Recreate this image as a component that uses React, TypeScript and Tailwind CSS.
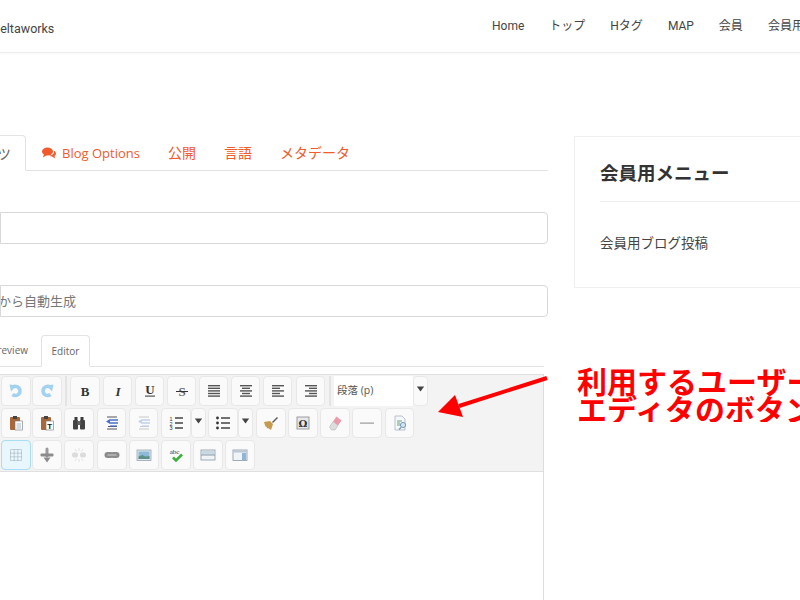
const NAV = ["Home", "トップ", "Hタグ", "MAP", "会員", "会員用ブログ"];

// little 16x16 drawings of the CKEditor toolbar glyphs
function Lines({ rows }: { rows: number[][] }) {
  return (
    <>
      {rows.map(([x, w], i) => (
        <rect key={i} x={x} y={2 + i * 2.6} width={w} height={1.4} fill="#555" />
      ))}
    </>
  );
}

function Glyph({ name }: { name: string }) {
  switch (name) {
    case "undo":
    case "redo":
      return (
        <g transform={name === "redo" ? "translate(16,0) scale(-1,1)" : undefined}>
          <path d="M5 4A4.6 4.6 0 1 1 4.5 11.5" fill="none" stroke="#a3d2f0" strokeWidth="3.6" />
          <path d="M1.5 1.5L8.5 2.5 3 8.5z" fill="#a3d2f0" />
        </g>
      );
    case "B":
    case "I":
    case "U":
    case "S":
      return (
        <>
          <text
            x="8"
            y={name === "U" ? 11 : 12.5}
            textAnchor="middle"
            fontSize="13"
            fontFamily="'Liberation Serif', serif"
            fontWeight="bold"
            fontStyle={name === "I" ? "italic" : "normal"}
            fill={name === "S" ? "#666" : "#333"}
          >
            {name}
          </text>
          {name === "U" && <rect x="3" y="12.5" width="10" height="1.2" fill="#555" />}
          {name === "S" && <rect x="2" y="8" width="12" height="1" fill="#333" />}
        </>
      );
    case "justify":
      return <Lines rows={[[2, 12], [2, 12], [2, 12], [2, 12], [2, 12]]} />;
    case "center":
      return <Lines rows={[[2, 12], [4, 8], [2, 12], [4, 8], [2, 12]]} />;
    case "left":
      return <Lines rows={[[2, 12], [2, 8], [2, 12], [2, 8], [2, 12]]} />;
    case "right":
      return <Lines rows={[[2, 12], [6, 8], [2, 12], [6, 8], [2, 12]]} />;
    case "paste":
    case "pastetext":
      return (
        <>
          <rect x="2" y="2" width="10" height="13" rx="1" fill="#a9683a" />
          <rect x="5" y="1" width="4" height="3" fill="#444" />
          <rect x="7" y="6" width="7.5" height="9" fill="#fff" stroke="#777" strokeWidth="0.6" />
          {name === "pastetext" ? (
            <text x="10.8" y="13.6" textAnchor="middle" fontSize="8" fontWeight="bold" fontFamily="'Liberation Sans', sans-serif" fill="#222">
              T
            </text>
          ) : (
            <path d="M8.5 9h4.5M8.5 11h4.5M8.5 13h4.5" stroke="#8aa9c0" strokeWidth="0.8" />
          )}
        </>
      );
    case "find":
      return (
        <>
          <rect x="3.5" y="2" width="3" height="4" fill="#3a3a3a" />
          <rect x="9.5" y="2" width="3" height="4" fill="#3a3a3a" />
          <rect x="2" y="5" width="5" height="9.5" rx="1" fill="#444" />
          <rect x="9" y="5" width="5" height="9.5" rx="1" fill="#444" />
          <rect x="6.5" y="6" width="3" height="4" fill="#666" />
        </>
      );
    case "outdent":
    case "indent": {
      const c = name === "outdent" ? "#4a70cc" : "#c2d0ea";
      const line = name === "outdent" ? "#555" : "#c8c8c8";
      return (
        <>
          <path d="M3 2h10M3 14h10M4 11.5h9" stroke={line} strokeWidth="1.2" />
          <path d="M6 5h8M6 8h8" stroke={c} strokeWidth="1.3" />
          <path d="M2 6.5l4-2.5v5z" fill={c} />
          <path d="M6 11h7" stroke={c} strokeWidth="1.2" />
        </>
      );
    }
    case "ol":
      return (
        <>
          <path d="M7 3h8M7 8h8M7 13h8" stroke="#444" strokeWidth="1.3" />
          <text x="3" y="6" textAnchor="middle" fontSize="5.5" fill="#333" fontFamily="'Liberation Sans', sans-serif">1</text>
          <text x="3" y="10.5" textAnchor="middle" fontSize="5.5" fill="#333" fontFamily="'Liberation Sans', sans-serif">2</text>
          <text x="3" y="15" textAnchor="middle" fontSize="5.5" fill="#333" fontFamily="'Liberation Sans', sans-serif">3</text>
        </>
      );
    case "ul":
      return (
        <>
          <path d="M6 3h9M6 8h9M6 13h9" stroke="#444" strokeWidth="1.3" />
          <circle cx="2.5" cy="3" r="1.4" fill="#333" />
          <circle cx="2.5" cy="8" r="1.4" fill="#333" />
          <circle cx="2.5" cy="13" r="1.4" fill="#333" />
        </>
      );
    case "brush":
      return (
        <>
          <path d="M9 7l5-5 1 1-5 5z" fill="#5a5a5a" />
          <path d="M1 7l6-1 3 3-2 6-3-2-1 .5-.5-2-1 .2z" fill="#c89a4c" />
        </>
      );
    case "omega":
      return (
        <>
          <rect x="2" y="2" width="12" height="12" fill="#e8e8e8" stroke="#888" strokeWidth="0.8" />
          <text x="8" y="12" textAnchor="middle" fontSize="10" fontWeight="bold" fontFamily="'DejaVu Serif', serif" fill="#333">
            Ω
          </text>
        </>
      );
    case "eraser":
      return (
        <>
          <path d="M9.5 1.5l5 4-3.5 5-5-4z" fill="#ea9aa8" />
          <path d="M6 6.5l5 4-3 4.5H4.5L2.5 12z" fill="#dddddd" stroke="#aaaaaa" strokeWidth="0.5" />
        </>
      );
    case "hr":
      return <rect x="1" y="7.5" width="14" height="1.2" fill="#999" />;
    case "preview":
      return (
        <>
          <path d="M3 1h7l3 3v11H3z" fill="#f4f8fa" stroke="#9ab" strokeWidth="0.7" />
          <path d="M5 6h5M5 8h3M5 10h4" stroke="#5a9a6a" strokeWidth="0.9" />
          <circle cx="11" cy="10" r="2.6" fill="#cfe4f4" stroke="#6d93b5" strokeWidth="0.9" />
          <path d="M9 12.5l-2 2" stroke="#6d93b5" strokeWidth="1.2" />
        </>
      );
    case "table":
      return <path d="M2.5 2.5h11v11h-11zM6.2 2.5v11M9.8 2.5v11M2.5 6.2h11M2.5 9.8h11" fill="none" stroke="#6f7c86" strokeWidth="0.6" strokeDasharray="1 1" />;
    case "anchor":
      return (
        <>
          <rect x="6.5" y="0.5" width="3" height="10" rx="1.5" fill="#9a9a9a" />
          <rect x="1.5" y="6.5" width="13" height="3" rx="1" fill="#8c8c8c" />
          <path d="M4.5 10.5h7L8 15.5z" fill="#8c8c8c" />
        </>
      );
    case "unlink":
      return (
        <>
          <rect x="1" y="5.5" width="6" height="5" rx="2" fill="#dcdcdc" />
          <rect x="9" y="5.5" width="6" height="5" rx="2" fill="#dcdcdc" />
          <path d="M8 1v3M8 12v3M4 2l1.5 2.5M12 2l-1.5 2.5M4 14l1.5-2.5M12 14l-1.5-2.5" stroke="#dddddd" strokeWidth="0.8" />
        </>
      );
    case "link":
      return (
        <>
          <rect x="0.5" y="5" width="9" height="6" rx="3" fill="#8c8c8c" />
          <rect x="6.5" y="5" width="9" height="6" rx="3" fill="#8c8c8c" />
          <path d="M3.5 8h9" stroke="#cfcfcf" strokeWidth="1" />
        </>
      );
    case "image":
      return (
        <>
          <rect x="1" y="3" width="14" height="10.5" fill="#dfe8ef" stroke="#8a98a5" strokeWidth="0.7" />
          <rect x="2.5" y="4.5" width="11" height="7.5" fill="#8fb9d8" />
          <path d="M2.5 12V9.5l4-1.5 3 1.5 4-.5V12z" fill="#5f9088" />
        </>
      );
    case "spell":
      return (
        <>
          <text x="6.5" y="6.5" textAnchor="middle" fontSize="7" fontFamily="'Liberation Serif', serif" fill="#333">
            abc
          </text>
          <path d="M5 10.5l3 3 6-6" fill="none" stroke="#3fae3f" strokeWidth="2.6" />
        </>
      );
    case "block":
      return (
        <>
          <rect x="1" y="3" width="14" height="10" fill="#f1f4f6" stroke="#8a98a5" strokeWidth="0.8" />
          <rect x="2" y="4" width="12" height="3.5" fill="#c8d8e4" />
          <rect x="1" y="7.5" width="14" height="1" fill="#8a98a5" />
        </>
      );
    case "about":
      return (
        <>
          <rect x="1" y="3" width="14" height="10.5" fill="#f1f4f6" stroke="#8a98a5" strokeWidth="0.8" />
          <rect x="1.5" y="3.5" width="13" height="2" fill="#b9c8d6" />
          <rect x="10" y="6" width="4" height="7" fill="#8fb6d8" />
        </>
      );
    case "caret":
      return <path d="M3.5 5h9l-4.5 6z" fill="#444" />;
  }
  return null;
}

function Tool({ name, className = "ml-0.5 w-[30px]", on = false }: { name: string; className?: string; on?: boolean }) {
  return (
    <div
      className={`flex h-[30px] shrink-0 items-center justify-center rounded-sm border ${
        on ? "border-[#a9dcf5] bg-[#e8f6fd]" : "border-[#e8e8e8] bg-[#fafafa]"
      } ${className}`}
    >
      <svg width="16" height="16" viewBox="0 0 16 16">
        <Glyph name={name} />
      </svg>
    </div>
  );
}

function Caret() {
  return (
    <div className="flex h-[30px] w-[15px] shrink-0 items-center justify-center rounded-sm border border-[#e8e8e8] bg-[#fafafa] pb-[5px]">
      <svg width="14" height="14" viewBox="0 0 16 16">
        <Glyph name="caret" />
      </svg>
    </div>
  );
}

export default function App() {
  return (
    <div className="h-[600px] w-[800px] overflow-hidden bg-white font-['Open_Sans','Noto_Sans_CJK_JP',sans-serif] text-[#333]">
      <header className="flex h-[53px] items-center border-b border-[#eeeeee] shadow-[0_1px_2px_rgba(0,0,0,0.03)]">
        <div className="-ml-[8px] w-[500px] shrink-0 pt-[7px] font-['Roboto','Noto_Sans_CJK_JP',sans-serif] text-[12.5px] text-[#444]">Deltaworks</div>
        <nav className="flex shrink-0 gap-[25px] whitespace-nowrap font-['Roboto','Noto_Sans_CJK_JP',sans-serif] text-xs text-[#444]">
          {NAV.map((n) => (
            <span key={n}>{n}</span>
          ))}
        </nav>
      </header>

      <div className="flex pt-[82px]">
        <main className="w-[548px] shrink-0">
          <div className="flex h-[36px] border-b border-[#e3e3e3] text-sm text-[#f15a2b]">
            <div className="-ml-[100px] flex h-[36px] w-[126px] items-center justify-end whitespace-nowrap rounded-t border border-b-white border-[#e3e3e3] bg-white pr-[14px] pt-px text-[#666]">
              コンテンツ
            </div>
            <div className="ml-[16px] flex items-center gap-[6px] pt-px">
              <svg width="14" height="12" viewBox="0 0 14 12" fill="#f15a2b">
                <ellipse cx="5.5" cy="4.5" rx="5.5" ry="4" />
                <path d="M2 7L1 10.5 5 8z" />
                <path d="M11.5 3.5C13 4.2 14 5.3 14 6.6c0 1-.6 1.8-1.5 2.4l.6 2.5-3-2c-1 0-2.2-.3-3-.8 3 0 5.4-1.8 4.9-5.2z" />
              </svg>
              <span className="text-[13px]">Blog Options</span>
            </div>
            <div className="ml-[28px] flex items-center pt-px">公開</div>
            <div className="ml-[28px] flex items-center pt-px">言語</div>
            <div className="ml-[28px] flex items-center pt-px">メタデータ</div>
          </div>

          <div className="mt-[41px] h-[32px] rounded-r border border-[#d8d8d8]" />
          <div className="mt-[41px] flex h-[32px] items-center overflow-hidden rounded-r border border-[#d8d8d8] text-[13px] text-[#777]">
            <span className="-ml-[55px] whitespace-nowrap pt-px">タイトルから自動生成</span>
          </div>

          <div className="mt-[18px] flex h-[32px] w-[544px] border-b border-[#e3e3e3] text-[10px] text-[#666]">
            <div className="-ml-[12px] flex w-[53px] items-center justify-end pr-[13px]">Preview</div>
            <div className="flex h-[32px] w-[49px] items-center justify-center rounded-t border border-b-white border-[#e3e3e3] bg-white">
              Editor
            </div>
          </div>

          <div className="mt-[7px] h-[226px] w-[544px] border-r border-[#dddddd]">
            <div className="flex h-[98px] flex-col gap-[2px] border-y border-[#e0e0e0] bg-[#f3f3f3] pt-[1px]">
              <div className="flex items-center">
                <Tool name="undo" className="ml-px w-[30px]" />
                <Tool name="redo" className="ml-px w-[30px]" />
                <div className="ml-[3px] h-[30px] w-[2px] bg-[#e4e4e4]" />
                <Tool name="B" className="ml-[3px] w-[30px]" />
                <Tool name="I" className="ml-[3px] w-[29px]" />
                <Tool name="U" className="ml-[3px] w-[29px]" />
                <Tool name="S" className="ml-[3px] w-[29px]" />
                <Tool name="justify" className="ml-[3px] w-[29px]" />
                <Tool name="center" className="ml-[3px] w-[29px]" />
                <Tool name="left" className="ml-[3px] w-[29px]" />
                <Tool name="right" className="ml-[4px] w-[29px]" />
                <div className="ml-[4px] h-[30px] w-[2px] bg-[#e4e4e4]" />
                <div className="ml-[3px] flex h-[30px] w-[79px] items-center bg-white pl-[3px] text-[10.5px] text-[#555]">段落 (p)</div>
                <Caret />
              </div>
              <div className="flex items-center">
                <Tool name="paste" className="ml-px w-[30px]" />
                <Tool name="pastetext" className="ml-px w-[30px]" />
                <Tool name="find" />
                <Tool name="outdent" className="ml-[3px] w-[29px]" />
                <Tool name="indent" className="ml-[3px] w-[29px]" />
                <Tool name="ol" className="ml-[3px] w-[30px]" />
                <Caret />
                <Tool name="ul" className="ml-[2px] w-[30px]" />
                <Caret />
                <Tool name="brush" className="ml-[3px] w-[30px]" />
                <Tool name="omega" />
                <Tool name="eraser" />
                <Tool name="hr" />
                <Tool name="preview" className="ml-[3px] w-[29px]" />
              </div>
              <div className="flex items-center">
                <Tool name="table" className="ml-px w-[30px]" on />
                <Tool name="anchor" className="ml-px w-[30px]" />
                <Tool name="unlink" />
                <Tool name="link" className="ml-[3px] w-[30px]" />
                <Tool name="image" />
                <Tool name="spell" />
                <Tool name="block" />
                <Tool name="about" />
              </div>
            </div>
          </div>
        </main>

        <aside className="ml-[26px] mt-px h-[152px] w-[260px] shrink-0 border border-[#efefef] px-[25px]">
          <h2 className="flex h-[65px] items-end border-b border-[#eeeeee] pb-[14px] text-[18.5px] font-bold text-[#333]">会員用メニュー</h2>
          <p className="mt-[31px] text-[13.5px] leading-[20px] text-[#444]">会員用ブログ投稿</p>
        </aside>
      </div>

      {/* annotation pasted over the screenshot */}
      <svg className="absolute left-[430px] top-[365px]" width="130" height="60" viewBox="0 0 130 60">
        <path d="M117 13L29 41" stroke="#ff0000" strokeWidth="4" />
        <path d="M8 47L25 30 33 52z" fill="#ff0000" />
      </svg>
      <div className="absolute left-[577px] top-[366px] w-[223px] overflow-hidden whitespace-nowrap font-['Noto_Sans_CJK_JP',sans-serif] text-[30px] font-bold leading-[28px] text-[#ff0000]">
        <div>利用するユーザー</div>
        <div>エディタのボタン</div>
      </div>
    </div>
  );
}
